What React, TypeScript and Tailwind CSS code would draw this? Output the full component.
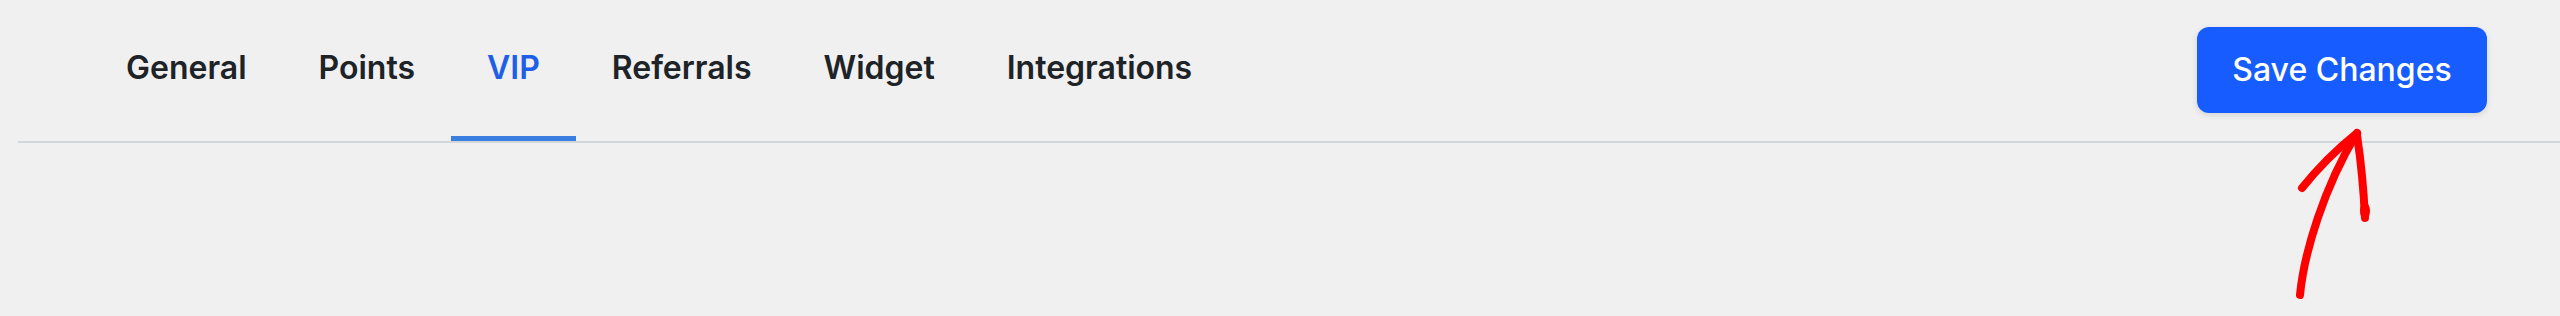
import React, { useState } from 'react'

const TABS = ['General', 'Points', 'VIP', 'Referrals', 'Widget', 'Integrations']

function Arrow(){
  // hand drawn annotation pointing at the save button
  return (
    <svg className="absolute left-[2290px] top-[125px]" width="90" height="180" viewBox="0 0 90 180" fill="none">
      <g stroke="#ff0000" strokeWidth="8" strokeLinecap="round" strokeLinejoin="round">
        <path d="M10 170 C14 128 34 62 67 8" />
        <path d="M12 63 Q36 33 67 8" />
        <path d="M67 10 Q73 50 75 93" />
      </g>
      <ellipse cx="75" cy="86" rx="5" ry="9" fill="#ff0000" />
    </svg>
  )
}

export default function App(){
  const [active, setActive] = useState('VIP')
  return (
    <div className="relative h-[316px] w-full bg-[#f0f0f1]" style={{ fontFamily: 'Inter, "Noto Sans", sans-serif' }}>
      <div className="ml-[18px] flex justify-between border-b-2 border-[#d3d6da]">
        <nav className="flex pl-[72px]">
          {TABS.map(t=>{
            const on = t===active
            return (
              <button
                key={t}
                onClick={()=>setActive(t)}
                className={`h-[141px] px-[36px] flex items-center border-b-[5px] text-[32px] font-semibold ${on ? 'border-[#3a7ee0] text-[#1f5fe6]' : 'border-transparent text-[#1d2327]'}`}
              >{t}</button>
            )
          })}
        </nav>
        <button className="mt-[27px] mr-[73px] w-[290px] h-[86px] rounded-[12px] bg-[#175cff] text-white text-[32px] font-medium shadow-[0_2px_6px_rgba(0,0,0,0.12)]">
          Save Changes
        </button>
      </div>
      <Arrow />
    </div>
  )
}
